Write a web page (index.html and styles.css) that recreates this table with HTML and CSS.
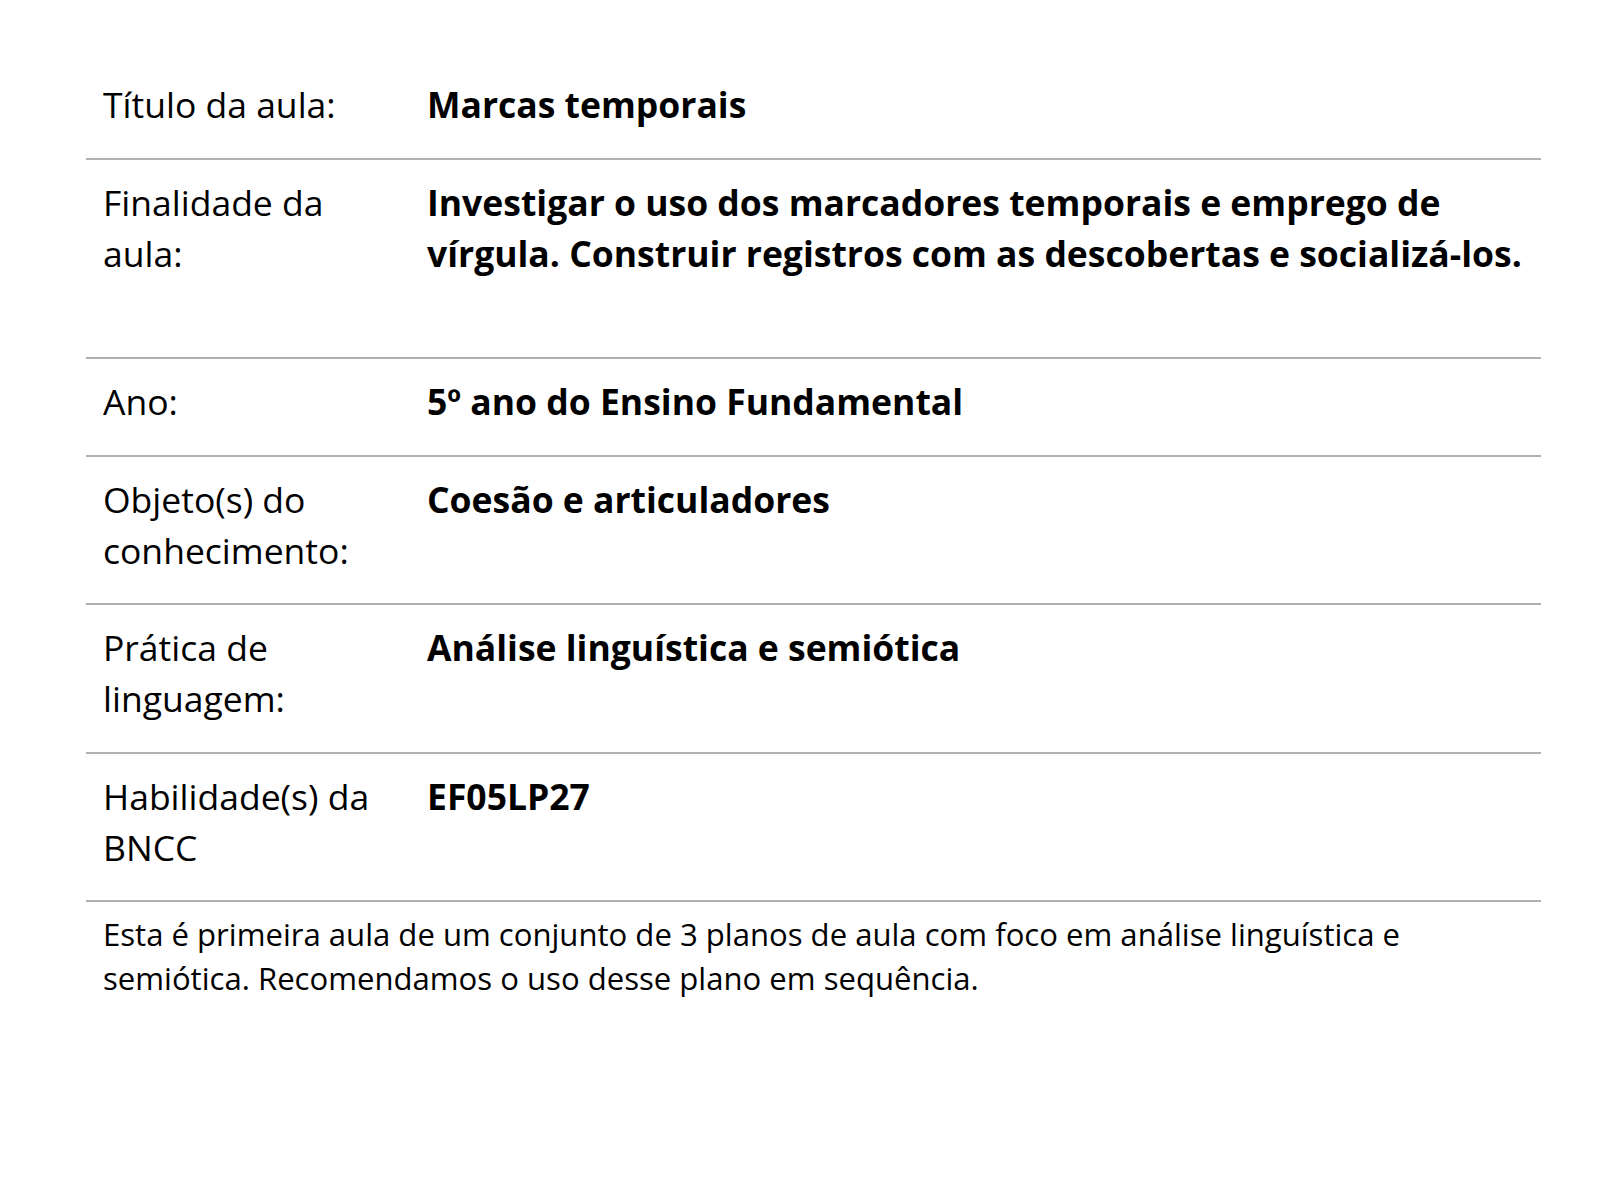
FILE: index.html
```html
<!DOCTYPE html>
<html lang="pt">
<head>
<meta charset="utf-8">
<link rel="stylesheet" href="styles.css">
</head>
<body>
<div class="plan">
  <div class="row">
    <div class="label">Título da aula:</div>
    <div class="value">Marcas temporais</div>
  </div>
  <div class="row row-tall">
    <div class="label">Finalidade da aula:</div>
    <div class="value">Investigar o uso dos marcadores temporais e emprego de vírgula. Construir registros com as descobertas e socializá-los.</div>
  </div>
  <div class="row">
    <div class="label">Ano:</div>
    <div class="value">5º ano do Ensino Fundamental</div>
  </div>
  <div class="row">
    <div class="label">Objeto(s) do conhecimento:</div>
    <div class="value">Coesão e articuladores</div>
  </div>
  <div class="row">
    <div class="label">Prática de linguagem:</div>
    <div class="value">Análise linguística e semiótica</div>
  </div>
  <div class="row">
    <div class="label">Habilidade(s) da BNCC</div>
    <div class="value">EF05LP27</div>
  </div>
  <p class="note">Esta é primeira aula de um conjunto de 3 planos de aula com foco em análise linguística e semiótica. Recomendamos o uso desse plano em sequência.</p>
</div>
</body>
</html>
```

FILE: styles.css
```css
html, body {
  margin: 0;
  padding: 0;
  background: #ffffff;
}
body {
  font-family: "Open Sans", "Noto Sans", sans-serif;
  color: #000000;
}
.plan {
  margin: 62px 59px 0 86px;
}
.row {
  display: grid;
  grid-template-columns: 324px 1fr;
  padding: 17px 10px 27.5px 17px;
  border-bottom: 2px solid #b0b0b0;
  font-size: 35.5px;
  line-height: 51px;
}
.row-tall {
  padding-bottom: 78.5px;
}
.label {
  font-weight: 400;
  padding-right: 16px;
}
.value {
  font-weight: 700;
}
.note {
  margin: 0;
  padding: 10px 40px 0 17px;
  font-size: 31.1px;
  line-height: 44px;
}
```
